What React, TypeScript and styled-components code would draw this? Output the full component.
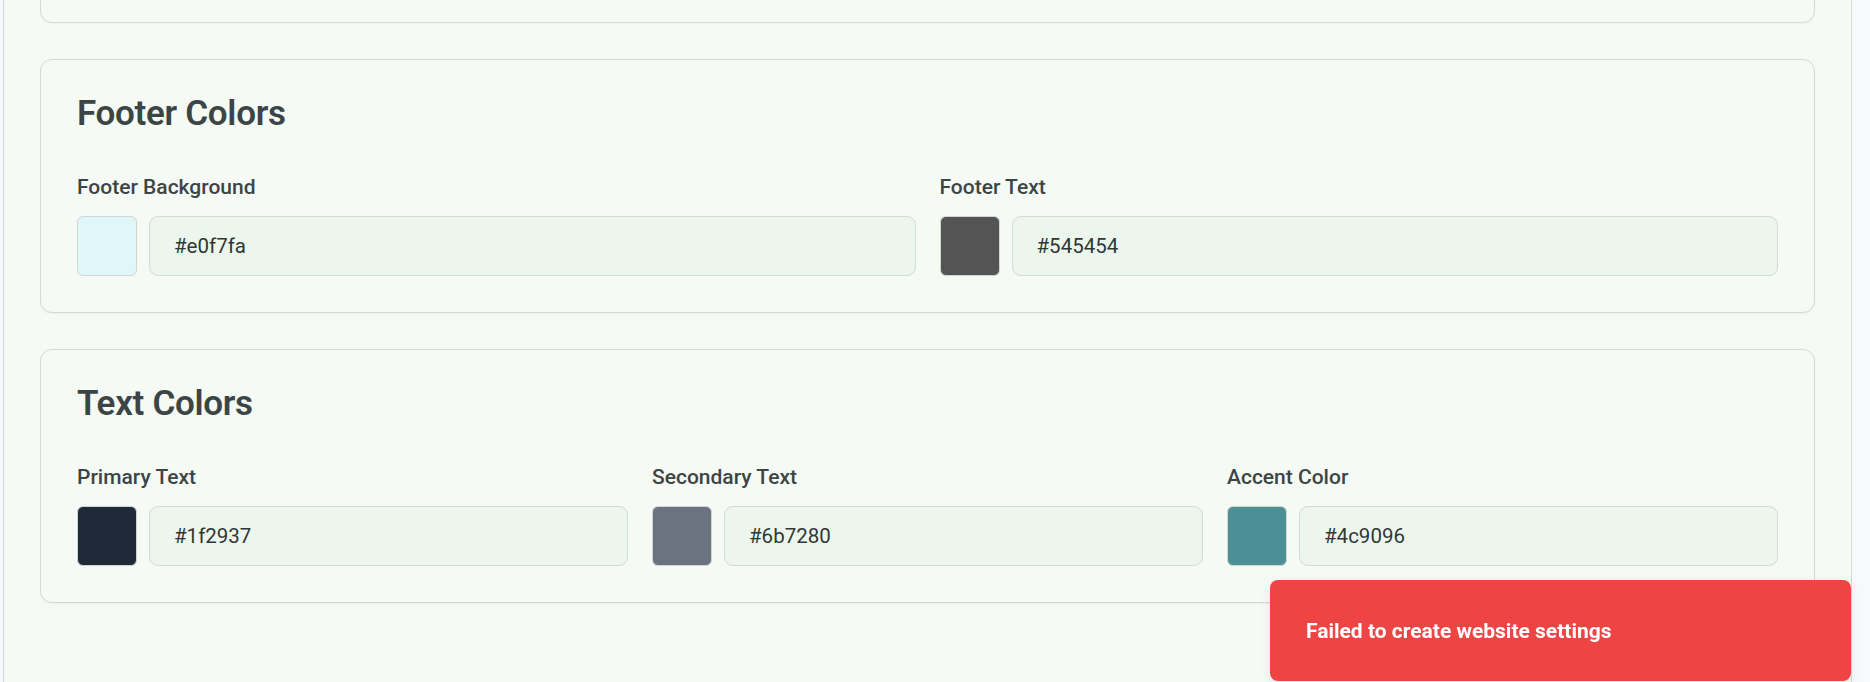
import React from "react";
import styled, { createGlobalStyle } from "styled-components";

const Global = createGlobalStyle`
  html, body {
    margin: 0;
    padding: 0;
    background: #f7f9fa;
    overflow: hidden;
  }
  * { box-sizing: border-box; }
  body {
    font-family: Roboto, "Noto Sans", "Liberation Sans", sans-serif;
  }
`;

const Shell = styled.div`
  display: flex;
  min-height: 100vh;
  background: #f7f9fa;
`;

const Main = styled.main`
  margin-left: 3px;
  width: 1849px;
  min-height: 100vh;
  background: #f6faf5;
  border-left: 1px solid #d3d8d8;
  border-right: 1px solid #d3d8d8;
  padding: 0 36px 60px;
`;

const Stack = styled.div`
  display: flex;
  flex-direction: column;
  gap: 36px;
  margin-top: -231px;
`;

const Card = styled.section`
  height: 254px;
  background: #f6faf5;
  border: 1px solid #d3d9d8;
  border-radius: 12px;
  box-shadow: 0 1px 2px rgba(0, 0, 0, 0.04);
  padding: 36px;
`;

const Heading = styled.h2`
  margin: 0 0 41px;
  font-size: 35px;
  line-height: 36px;
  font-weight: 600;
  color: #3c4545;
  letter-spacing: -0.3px;
`;

const Grid = styled.div<{ $cols: number }>`
  display: grid;
  grid-template-columns: repeat(${(p) => p.$cols}, 1fr);
  gap: 24px;
`;

const Field = styled.div`
  display: flex;
  flex-direction: column;
`;

const Label = styled.label`
  font-size: 21px;
  line-height: 28px;
  font-weight: 500;
  color: #3c4545;
  margin-bottom: 15px;
`;

const Row = styled.div`
  display: flex;
  gap: 12px;
`;

const Swatch = styled.div<{ $color: string }>`
  flex: none;
  width: 60px;
  height: 60px;
  border-radius: 6px;
  border: 1px solid #d0d6d6;
  background: ${(p) => p.$color};
`;

const HexInput = styled.input`
  flex: 1;
  min-width: 0;
  height: 60px;
  padding: 0 24px;
  border: 1px solid #d3d9d8;
  border-radius: 9px;
  background: #edf6ed;
  font-family: Roboto, "Noto Sans", "Liberation Sans", sans-serif;
  font-size: 20.5px;
  font-weight: 400;
  color: #2f3737;
  outline: none;
`;

const Toast = styled.div`
  position: fixed;
  right: 19px;
  bottom: 1px;
  width: 581px;
  height: 101px;
  display: flex;
  align-items: center;
  padding: 0 36px;
  background: #ef4444;
  border-radius: 8px;
  box-shadow: 0 4px 12px rgba(0, 0, 0, 0.08);
  color: #ffffff;
  font-size: 21px;
  font-weight: 700;
`;

type FieldDef = { label: string; value: string };

const ColorField = ({ label, value }: FieldDef) => (
  <Field>
    <Label>{label}</Label>
    <Row>
      <Swatch $color={value} />
      <HexInput value={value} readOnly />
    </Row>
  </Field>
);

const sections: { title: string; fields: FieldDef[] }[] = [
  {
    title: "Header Colors",
    fields: [
      { label: "Header Background", value: "#ffffff" },
      { label: "Header Text", value: "#1f2937" },
    ],
  },
  {
    title: "Footer Colors",
    fields: [
      { label: "Footer Background", value: "#e0f7fa" },
      { label: "Footer Text", value: "#545454" },
    ],
  },
  {
    title: "Text Colors",
    fields: [
      { label: "Primary Text", value: "#1f2937" },
      { label: "Secondary Text", value: "#6b7280" },
      { label: "Accent Color", value: "#4c9096" },
    ],
  },
];

export default function App() {
  return (
    <>
      <Global />
      <Shell>
        <Main>
          <Stack>
            {sections.map((s) => (
              <Card key={s.title}>
                <Heading>{s.title}</Heading>
                <Grid $cols={s.fields.length}>
                  {s.fields.map((f) => (
                    <ColorField key={f.label} {...f} />
                  ))}
                </Grid>
              </Card>
            ))}
          </Stack>
        </Main>
      </Shell>
      <Toast>Failed to create website settings</Toast>
    </>
  );
}
